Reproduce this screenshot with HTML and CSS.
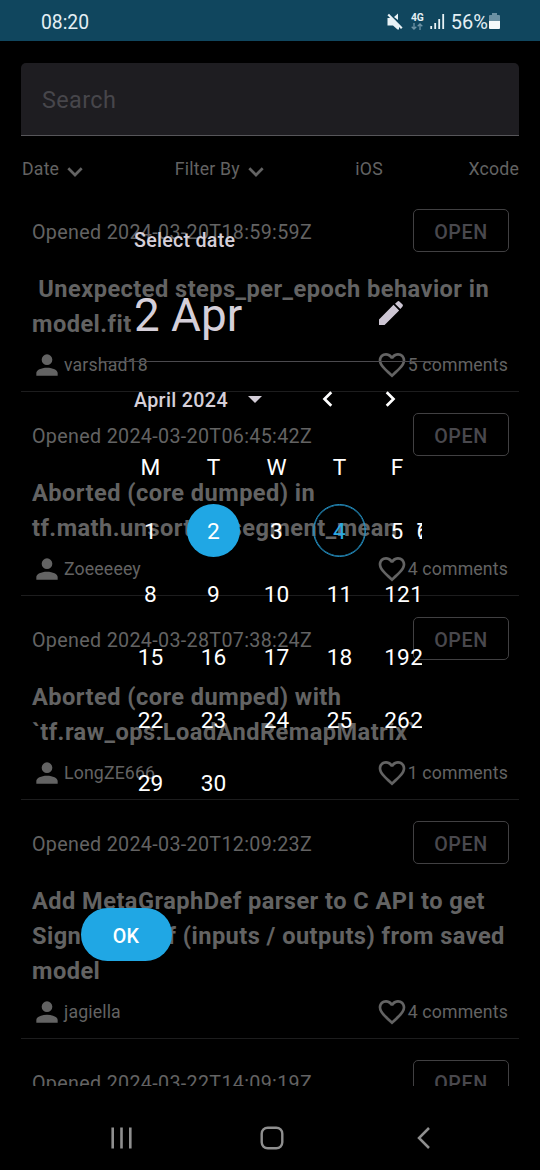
FILE: index.html
```html
<!DOCTYPE html>
<html lang="en">
<head>
<meta charset="utf-8">
<title>Issues</title>
<link rel="stylesheet" href="styles.css">
</head>
<body>
<svg class="defs" width="0" height="0">
  <symbol id="account" viewBox="0 0 24 24"><path d="M12,4A4,4 0 0,1 16,8A4,4 0 0,1 12,12A4,4 0 0,1 8,8A4,4 0 0,1 12,4M12,14C16.42,14 20,15.79 20,18V20H4V18C4,15.79 7.58,14 12,14Z"/></symbol>
  <symbol id="heart" viewBox="0 0 24 24"><path d="M12.1,18.55L12,18.65L11.89,18.55C7.14,14.24 4,11.39 4,8.5C4,6.5 5.5,5 7.5,5C9.04,5 10.54,6 11.07,7.36H12.93C13.46,6 14.96,5 16.5,5C18.5,5 20,6.5 20,8.5C20,11.39 16.86,14.24 12.1,18.55M16.5,3C14.76,3 13.09,3.81 12,5.08C10.91,3.81 9.24,3 7.5,3C4.42,3 2,5.41 2,8.5C2,12.27 5.4,15.36 10.55,20.03L12,21.35L13.45,20.03C18.6,15.36 22,12.27 22,8.5C22,5.41 19.58,3 16.5,3Z"/></symbol>
  <symbol id="down" viewBox="0 0 16 10"><path d="M1.3 1.3 8 8l6.700-6.700" fill="none" stroke="currentColor" stroke-width="2.700"/></symbol>
</svg>
<div class="screen">
  <header class="status">
    <span class="clock">08:20</span>
    <div class="indicators">
      <svg class="mute" width="16" height="17" viewBox="0 0 16 17"><path d="M.5 5H4L12 13V16.500H10.500L6 12.500H.5ZM11 .5V7L7 4Z" fill="#e9f2f6"/><path d="M1.200 1.500 14.800 15.200" stroke="#e9f2f6" stroke-width="2.200"/></svg>
      <div class="network"><span>4G</span>
        <svg width="12" height="7" viewBox="0 0 12 7" fill="none" stroke="#6f94a6" stroke-width="1.300"><path d="M3 0V6M.7 3.700 3 6 5.300 3.700M9 7V1M6.700 3.300 9 1l2.300 2.300"/></svg>
      </div>
      <svg class="signal" width="15" height="16" viewBox="0 0 15 16" fill="#e9f2f6"><path d="M.3 12h1.800v3H.3ZM4.300 9h1.800v6H4.300ZM8.300 5h1.800v10H8.300ZM12.300 0h1.800v15h-1.800Z"/></svg>
      <span class="percent">56%</span>
      <svg class="battery" width="11" height="17" viewBox="0 0 11 17"><path d="M3 0h5v2h2q1 0 1 1v5H0V3q0-1 1-1h2Z" fill="#6c91a3"/><path d="M0 8h11v7q0 1-1 1H1q-1 0-1-1Z" fill="#f6fafb"/></svg>
    </div>
  </header>

  <main class="content">
    <div class="search">Search</div>
    <nav class="filters">
      <span class="filter">Date<svg width="16" height="10"><use href="#down"/></svg></span>
      <span class="filter">Filter By<svg width="16" height="10"><use href="#down"/></svg></span>
      <span>iOS</span>
      <span>Xcode</span>
    </nav>

    <article class="issue">
      <div class="issue-head"><span class="opened">Opened 2024-03-20T18:59:59Z</span><span class="state">OPEN</span></div>
      <h2>&nbsp;Unexpected steps_per_epoch behavior in<br>model.fit</h2>
      <div class="meta"><svg><use href="#account"/></svg><span>varshad18</span><svg class="like"><use href="#heart"/></svg><span>5 comments</span></div>
    </article>
    <article class="issue">
      <div class="issue-head"><span class="opened">Opened 2024-03-20T06:45:42Z</span><span class="state">OPEN</span></div>
      <h2>Aborted (core dumped) in<br>tf.math.unsorted_segment_mean</h2>
      <div class="meta"><svg><use href="#account"/></svg><span>Zoeeeeey</span><svg class="like"><use href="#heart"/></svg><span>4 comments</span></div>
    </article>
    <article class="issue">
      <div class="issue-head"><span class="opened">Opened 2024-03-28T07:38:24Z</span><span class="state">OPEN</span></div>
      <h2>Aborted (core dumped) with<br>`tf.raw_ops.LoadAndRemapMatrix`</h2>
      <div class="meta"><svg><use href="#account"/></svg><span>LongZE666</span><svg class="like"><use href="#heart"/></svg><span>1 comments</span></div>
    </article>
    <article class="issue">
      <div class="issue-head"><span class="opened">Opened 2024-03-20T12:09:23Z</span><span class="state">OPEN</span></div>
      <h2>Add MetaGraphDef parser to C API to get<br>SignatureDef (inputs / outputs) from saved<br>model</h2>
      <div class="meta"><svg><use href="#account"/></svg><span>jagiella</span><svg class="like"><use href="#heart"/></svg><span>4 comments</span></div>
    </article>
    <article class="issue">
      <div class="issue-head"><span class="opened">Opened 2024-03-22T14:09:19Z</span><span class="state">OPEN</span></div>
    </article>
  </main>

  <footer class="navbar">
    <svg width="22" height="22" viewBox="0 0 22 22" stroke="#8f8f8f" stroke-width="2.600"><path d="M1.700.5v21M10.500.5v21M19.300.5v21"/></svg>
    <svg class="home" width="24" height="24" viewBox="0 0 24 24" fill="none" stroke="#8f8f8f" stroke-width="2.400"><rect x="1.700" y="1.700" width="20.600" height="20.600" rx="6"/></svg>
    <svg width="14" height="22" viewBox="0 0 14 22" fill="none" stroke="#8f8f8f" stroke-width="2.500"><path d="M12 1 2 11 12 21"/></svg>
  </footer>

  <section class="dialog">
    <div class="label">Select date</div>
    <div class="picked">
      <span>2 Apr</span>
      <svg width="32" height="32" viewBox="0 0 24 24"><path d="M20.500,7.300C21.100,6.700 21.100,6.100 20.500,5.500L18.500,3.500C17.900,2.900 17.300,2.900 16.700,3.500L15,5L19,9M3,16.800V21H7.200L18.100,10.100L13.900,5.900L3,16.800Z" fill="#cdc6d3"/></svg>
    </div>
    <div class="rule"></div>
    <div class="month">
      <span>April 2024</span>
      <svg class="caret" width="14" height="8" viewBox="0 0 14 8"><path d="M0 0h14L7 7Z" fill="#d3cdd7"/></svg>
      <svg class="prev" width="11" height="16" viewBox="0 0 11 16"><path d="M9.300 1.200 2.500 8l6.800 6.800" fill="none" stroke="#fff" stroke-width="2.700"/></svg>
      <svg class="next" width="11" height="16" viewBox="0 0 11 16"><path d="M1.700 1.200 8.500 8l-6.800 6.800" fill="none" stroke="#fff" stroke-width="2.700"/></svg>
    </div>
    <div class="week names"><span>M</span><span>T</span><span>W</span><span>T</span><span class="fri">F</span></div>
    <div class="week"><span>1</span><span class="selected">2</span><span>3</span><span class="today">4</span><span class="fri">5</span><span class="weekend">6</span><span class="weekend">7</span></div>
    <div class="week"><span>8</span><span>9</span><span>10</span><span>11</span><span class="fri">12</span><span class="weekend">13</span></div>
    <div class="week"><span>15</span><span>16</span><span>17</span><span>18</span><span class="fri">19</span><span class="weekend">20</span></div>
    <div class="week"><span>22</span><span>23</span><span>24</span><span>25</span><span class="fri">26</span><span class="weekend">27</span></div>
    <div class="week"><span>29</span><span>30</span></div>
    <button class="ok">OK</button>
  </section>
</div>
</body>
</html>
```
FILE: styles.css
```css
* { box-sizing: border-box; }
body { margin: 0; background: #000; font-family: Roboto, sans-serif; }
svg { display: block; flex: none; }
.defs { position: absolute; }
.screen {
  position: relative;
  width: 540px;
  height: 1170px;
  display: flex;
  flex-direction: column;
  overflow: hidden;
  background: #000;
}
.status {
  height: 41px;
  flex: none;
  display: flex;
  justify-content: space-between;
  padding: 3px 40px 0 41px;
  align-items: center;
  background: #10465e;
  color: #e4eff4;
  font-size: 19.300px;
}
.indicators { display: flex; align-items: center; }
.network {
  display: flex;
  flex-direction: column;
  align-items: center;
  gap: 1px;
  margin: 0 6px 2px 8px;
  font-size: 10.300px;
  line-height: 9px;
  font-weight: 700;
}
.signal { margin-right: 6px; }
.percent { margin-right: 1px; font-size: 20px; }
.mute, .battery { margin-bottom: 2px; }

.content {
  height: 1045px;
  flex: none;
  padding: 22px 21px 0;
  overflow: hidden;
  color: #636363;
}
.search {
  height: 73px;
  padding: 2px 21px 0;
  display: flex;
  align-items: center;
  border-bottom: 1px solid #57565a;
  border-radius: 5px 5px 0 0;
  background: #1e1d21;
  color: #47464b;
  font-size: 23.400px;
  letter-spacing: 0.400px;
}
.filters {
  height: 52px;
  padding: 14px 0 0 1px;
  display: flex;
  justify-content: space-between;
  align-items: center;
  font-size: 17.700px;
  letter-spacing: 0.200px;
}
.filter { display: flex; align-items: center; gap: 8px; }
.filter svg { margin: 6px 6px 0 0; }

.issue { padding: 21px 10px 4px; border-bottom: 1px solid #1d1d1e; }
.issue-head {
  height: 43px;
  display: flex;
  justify-content: space-between;
  align-items: center;
  font-size: 19.690px;
  letter-spacing: 0.330px;
}
.opened { padding: 3px 0 0 1px; }
.state {
  width: 96px;
  height: 43px;
  display: grid;
  place-items: center;
  padding-top: 3px;
  border: 1px solid #414042;
  border-radius: 5px;
  color: #49484d;
  font-weight: 500;
  letter-spacing: 0.600px;
}
.issue h2 {
  margin: 20px 0 0;
  padding-left: 1px;
  font-size: 23.620px;
  line-height: 35px;
  font-weight: 700;
  letter-spacing: 0.450px;
  white-space: nowrap;
}
.meta {
  height: 45px;
  display: flex;
  align-items: center;
  padding-right: 1px;
  font-size: 17.700px;
  letter-spacing: 0.150px;
}
.meta svg { width: 32px; height: 32px; margin-right: 1px; fill: currentColor; }
.meta .like { margin: 0 0 0 auto; }

.navbar {
  flex: 1;
  display: flex;
  justify-content: space-between;
  align-items: center;
  padding: 20px 109px 0 111px;
}
.home { margin-right: 6px; }

.dialog {
  position: absolute;
  left: 81px;
  top: 224px;
  width: 378px;
  color: #fff;
}
.label {
  height: 32px;
  padding: 1px 0 0 53px;
  line-height: 32px;
  font-size: 19.690px;
  font-weight: 500;
  letter-spacing: 0.250px;
  color: #d5cfd9;
}
.picked {
  height: 105px;
  padding: 14px 52px 0 53px;
  display: flex;
  justify-content: space-between;
  align-items: center;
  color: #d5cfd9;
  font-size: 45.800px;
}
.picked svg { margin-bottom: 6px; }
.rule { height: 1px; margin: 0 21px; background: #4b4a4e; }
.month {
  height: 74px;
  padding: 2px 0 0 53px;
  display: flex;
  align-items: center;
  font-size: 19.690px;
  font-weight: 500;
  letter-spacing: 0.330px;
  color: #d5cfd9;
}
.caret { margin-left: 20px; }
.prev { margin-left: 60px; }
.next { margin-left: 52px; }
.prev, .next { margin-bottom: 2px; }
.week {
  width: 303px;
  height: 63px;
  margin-left: 38px;
  display: grid;
  grid-template-columns: repeat(4, 63px) 13px 26px 26px;
  justify-items: center;
  align-items: center;
  overflow: hidden;
  font-size: 22.700px;
}
.week span { padding-top: 1px; }
.week.names span { padding: 0 0 1px; }
.selected, .today {
  width: 53px;
  height: 53px;
  display: grid;
  place-items: center;
  border-radius: 50%;
}
.selected { background: #20a7e4; }
.today { border: 1px solid #2592c5; box-shadow: inset 0 0 0 0.500px #2592c5; color: #2ba9e2; }
.fri { grid-column: 6; grid-row: 1; }
.weekend { grid-column: 7; grid-row: 1; }
.ok {
  display: block;
  width: 91px;
  height: 53px;
  margin-top: 94px;
  padding: 3px 1px 0 0;
  border: 0;
  border-radius: 27px;
  background: #20a7e4;
  color: #fff;
  font: 500 19.690px Roboto, sans-serif;
  letter-spacing: 0.200px;
}
```
